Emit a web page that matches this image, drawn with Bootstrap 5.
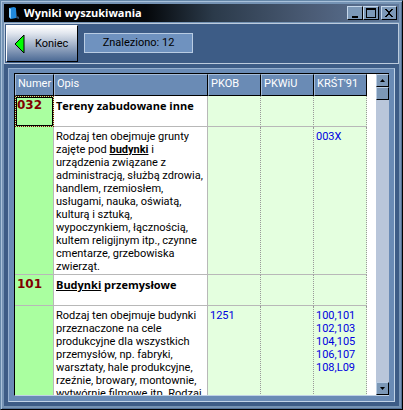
<!DOCTYPE html>
<html lang="pl">
<head>
<meta charset="utf-8">
<meta name="viewport" content="width=device-width, initial-scale=1">
<title>Wyniki wyszukiwania</title>
<link rel="stylesheet" href="https://cdn.jsdelivr.net/npm/bootstrap@5.3.0/dist/css/bootstrap.min.css">
<style>
body { font: 11px/13px Roboto, "Liberation Sans", sans-serif; color: #000; background: #7a98b8; }
.window { border: 1px solid; border-color: #6688a9 #000 #000 #6688a9; box-shadow: inset 1px 1px #a9c1da, inset -1px -1px #526f94; padding: 3px; background: #7593b4; }
.titlebar { height: 18px; background: linear-gradient(90deg, #000 0, #05080b 36%, #2b3a4a 53%, #4b5c76 78%, #60799c); padding: 0 2px 0 4px; }
.titlebar h1 { font: bold 11px/18px "Open Sans", "Noto Sans", sans-serif; color: #fff; }
.winbtn { width: 16px; height: 14px; border: 1px solid; border-color: #c6d8eb #000 #000 #c6d8eb; background: #7c98b7; }
.winbtn.close-btn { margin-left: 2px; }
.toolbar { height: 41px; border: 1px solid #bccbdd; background: #3d5c86; margin-top: 1px; padding: 1px 0 0 1px; }
.exit { width: 72px; height: 37px; border: 1px solid; border-color: #fff #000 #000 #fff; background: linear-gradient(#fff, #e2e7ef 20%, #4c6a95); color: #000; padding: 0 0 0 7px; gap: 10px; }
.found { width: 109px; height: 20px; margin: 8px 0 0 6px; border: 1px solid #b9cce3; background: #6f92bf; line-height: 18px; }
.client { background: #3d5c86; padding: 4px; }
.panel { border: 1px solid; border-color: #96b0cf #c0d2e6 #c0d2e6 #96b0cf; background: #6a8bb5; padding: 4px 5px 5px; }
.grid { background: #fff; border: 1px solid #000; border-width: 1px 0 0 1px; border-bottom: 1px solid #c0d2e6; }
.results { width: 352px; table-layout: fixed; border-collapse: separate; border-spacing: 0; }
.results th { height: 22px; background: #6a8bb5; color: #fff; font-weight: 400; padding: 2px 2px; border: 1px solid; border-color: #a5bdda #000 #000 #a5bdda; vertical-align: top; white-space: nowrap; }
.results td { padding: 3px 2px 0; border-right: 1px solid #b8b8b8; border-bottom: 1px solid #b8b8b8; vertical-align: top; white-space: nowrap; }
.results td.number { background: #aaffa0; color: #800000; font: bold 12px/13px "DejaVu Sans", sans-serif; }
.results td.code { background: #e4ffdf; color: #0000e0; border-right-style: dotted; border-right-color: #999; }
.results td.selected { border: 1px dotted #800000; padding: 0; }
.selected div { border: 1px solid #000; height: 29px; padding: 1px 0; }
.results .name { font: bold 11px/13px "Open Sans", sans-serif; }
.results .short { height: 31px; }
.results .c-desc { height: 148px; }
.scroller { width: 13px; background: #b9c6da; }
.scrollbtn { width: 13px; height: 13px; border: 1px solid; border-color: #b9cce3 #000 #000 #b9cce3; background: #7c98b7; }
</style>
<script src="https://cdn.jsdelivr.net/npm/bootstrap@5.3.0/dist/js/bootstrap.bundle.min.js"></script>
</head>
<body>
<main class="window vh-100 d-flex flex-column overflow-hidden">
  <header class="titlebar d-flex align-items-center flex-shrink-0">
    <svg width="12" height="14" viewBox="0 0 12 14" aria-hidden="true"><path d="M1 2l5-1 2 1v10l-5 1-2-2z" fill="#2089dd"/><path d="M1 2l2 1v10l-2-2z" fill="#8dd0ff"/><path d="M8 3v9l3 1v-2l-2-1" fill="#35506c"/></svg>
    <h1 class="m-0 ms-1 flex-fill text-nowrap">Wyniki wyszukiwania</h1>
    <div class="d-flex">
      <button type="button" class="winbtn p-0 d-flex" aria-label="Minimalizuj"><svg width="14" height="12"><path d="M4 9h6v2H4z"/></svg></button>
      <button type="button" class="winbtn p-0 d-flex" aria-label="Maksymalizuj"><svg width="14" height="12"><path d="M2 1h10v10H2zM3 3v7h8V3z" fill-rule="evenodd"/></svg></button>
      <button type="button" class="winbtn close-btn p-0 d-flex" aria-label="Zamknij"><svg width="14" height="12" shape-rendering="crispEdges"><path d="M3 2h2v1h1v1h2V3h1V2h2v1h-1v1H9v1H8v2h1v1h1v1h1v1H9V9H8V8H6v1H5v1H3V9h1V8h1V7h1V5H5V4H4V3H3z"/></svg></button>
    </div>
  </header>
  <section class="toolbar d-flex flex-shrink-0">
    <button type="button" class="exit d-flex align-items-center"><svg width="11" height="20" viewBox="0 0 11 20" aria-hidden="true"><path d="M10 1v18L1 10z" fill="#0f0" stroke="#000"/></svg>Koniec</button>
    <output class="found text-center">Znaleziono: 12</output>
  </section>
  <section class="client flex-fill d-flex overflow-hidden">
    <div class="panel flex-fill d-flex overflow-hidden">
      <div class="grid flex-fill d-flex overflow-hidden">
        <div class="flex-fill overflow-hidden">
          <table class="results">
            <colgroup><col style="width:39px"><col style="width:154px"><col style="width:53px"><col style="width:53px"><col style="width:53px"></colgroup>
            <thead><tr><th>Numer</th><th>Opis</th><th>PKOB</th><th>PKWiU</th><th>KRŚT'91</th></tr></thead>
            <tbody>
              <tr class="short"><td class="number selected"><div>032</div></td><td class="name">Tereny zabudowane inne</td><td class="code"></td><td class="code"></td><td class="code"></td></tr>
              <tr class="long"><td class="number"></td><td class="c-desc">Rodzaj ten obejmuje grunty<br>zajęte pod <b><u>budynki</u></b> i<br>urządzenia związane z<br>administracją, służbą zdrowia,<br>handlem, rzemiosłem,<br>usługami, nauka, oświatą,<br>kulturą i sztuką,<br>wypoczynkiem, łącznością,<br>kultem religijnym itp., czynne<br>cmentarze, grzebowiska<br>zwierząt.</td><td class="code"></td><td class="code"></td><td class="code">003X</td></tr>
              <tr class="short"><td class="number">101</td><td class="name"><u>Budynki</u> przemysłowe</td><td class="code"></td><td class="code"></td><td class="code"></td></tr>
              <tr class="long"><td class="number"></td><td class="c-desc">Rodzaj ten obejmuje budynki<br>przeznaczone na cele<br>produkcyjne dla wszystkich<br>przemysłów, np. fabryki,<br>warsztaty, hale produkcyjne,<br>rzeźnie, browary, montownie,<br>wytwórnie filmowe itp. Rodzaj</td><td class="code">1251</td><td class="code"></td><td class="code">100,101<br>102,103<br>104,105<br>106,107<br>108,L09</td></tr>
            </tbody>
          </table>
        </div>
        <div class="scroller d-flex flex-column flex-shrink-0">
          <button type="button" class="scrollbtn p-0 d-flex" aria-label="W górę"><svg width="11" height="11"><path d="M3 7h5L5.500 4z"/></svg></button>
          <div class="scrollbtn"></div>
          <button type="button" class="scrollbtn p-0 d-flex mt-auto" aria-label="W dół"><svg width="11" height="11"><path d="M3 4h5L5.500 7z"/></svg></button>
        </div>
      </div>
    </div>
  </section>
</main>
</body>
</html>
